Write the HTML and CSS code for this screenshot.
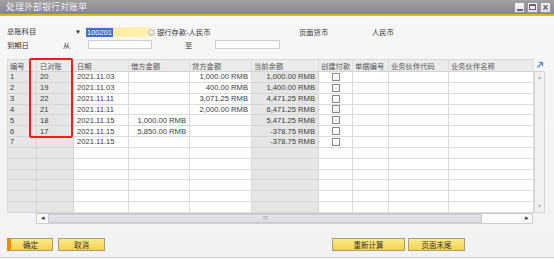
FILE: index.html
```html
<!DOCTYPE html>
<html>
<head>
<meta charset="utf-8">
<title>处理外部银行对账单</title>
<link rel="stylesheet" href="styles.css">
</head>
<body>
<div class="window">
  <div class="titlebar">
    <span class="title">处理外部银行对账单</span>
    <div class="winbtns">
      <span class="wb"><span class="ico-min"></span></span>
      <span class="wb"><span class="ico-max"></span></span>
      <span class="wb"><span class="ico-close">×</span></span>
    </div>
  </div>
  <div class="accent"></div>

  <div class="form">
    <div class="frow r1">
      <div class="select">总账科目<span class="arrow">▼</span></div>
      <div class="acct"><span class="selected">100201</span><span class="circle"></span></div>
      <span class="acctname">银行存款-人民币</span>
      <span class="curlbl">页面货币</span>
      <span>人民币</span>
    </div>
    <div class="frow r2">
      <span class="due">到期日</span>
      <span class="from">从</span>
      <div class="input in1"></div>
      <span class="to">至</span>
      <div class="input in2"></div>
    </div>
  </div>

  <div class="gridwrap">
    <div class="gridmain">
      <div class="grid">
        <div class="c hd">编号</div><div class="c hd">已对账</div><div class="c hd">日期</div><div class="c hd">借方金额</div><div class="c hd">贷方金额</div><div class="c hd">当前余额</div><div class="c hd">创建付款</div><div class="c hd">单据编号</div><div class="c hd">业务伙伴代码</div><div class="c hd">业务伙伴名称</div>

        <div class="c g">1</div><div class="c g">20</div><div class="c">2021.11.03</div><div class="c r"></div><div class="c r">1,000.00 RMB</div><div class="c g r">1,000.00 RMB</div><div class="c cb"><span class="box"></span></div><div class="c"></div><div class="c"></div><div class="c"></div>
        <div class="c g">2</div><div class="c g">19</div><div class="c">2021.11.03</div><div class="c r"></div><div class="c r">400.00 RMB</div><div class="c g r">1,400.00 RMB</div><div class="c cb"><span class="box"></span></div><div class="c"></div><div class="c"></div><div class="c"></div>
        <div class="c g">3</div><div class="c g">22</div><div class="c">2021.11.11</div><div class="c r"></div><div class="c r">3,071.25 RMB</div><div class="c g r">4,471.25 RMB</div><div class="c cb"><span class="box"></span></div><div class="c"></div><div class="c"></div><div class="c"></div>
        <div class="c g">4</div><div class="c g">21</div><div class="c">2021.11.11</div><div class="c r"></div><div class="c r">2,000.00 RMB</div><div class="c g r">6,471.25 RMB</div><div class="c cb"><span class="box"></span></div><div class="c"></div><div class="c"></div><div class="c"></div>
        <div class="c g">5</div><div class="c g">18</div><div class="c">2021.11.15</div><div class="c r">1,000.00 RMB</div><div class="c r"></div><div class="c g r">5,471.25 RMB</div><div class="c cb"><span class="box"></span></div><div class="c"></div><div class="c"></div><div class="c"></div>
        <div class="c g">6</div><div class="c g">17</div><div class="c">2021.11.15</div><div class="c r">5,850.00 RMB</div><div class="c r"></div><div class="c g r">-378.75 RMB</div><div class="c cb"><span class="box"></span></div><div class="c"></div><div class="c"></div><div class="c"></div>
        <div class="c g">7</div><div class="c g"></div><div class="c">2021.11.15</div><div class="c r"></div><div class="c r"></div><div class="c g r">-378.75 RMB</div><div class="c cb"><span class="box"></span></div><div class="c"></div><div class="c"></div><div class="c"></div>

        <div class="c g"></div><div class="c g"></div><div class="c"></div><div class="c"></div><div class="c"></div><div class="c g"></div><div class="c"></div><div class="c"></div><div class="c"></div><div class="c"></div>
        <div class="c g"></div><div class="c g"></div><div class="c"></div><div class="c"></div><div class="c"></div><div class="c g"></div><div class="c"></div><div class="c"></div><div class="c"></div><div class="c"></div>
        <div class="c g"></div><div class="c g"></div><div class="c"></div><div class="c"></div><div class="c"></div><div class="c g"></div><div class="c"></div><div class="c"></div><div class="c"></div><div class="c"></div>
        <div class="c g"></div><div class="c g"></div><div class="c"></div><div class="c"></div><div class="c"></div><div class="c g"></div><div class="c"></div><div class="c"></div><div class="c"></div><div class="c"></div>
        <div class="c g"></div><div class="c g"></div><div class="c"></div><div class="c"></div><div class="c"></div><div class="c g"></div><div class="c"></div><div class="c"></div><div class="c"></div><div class="c"></div>
        <div class="c g"></div><div class="c g"></div><div class="c"></div><div class="c"></div><div class="c"></div><div class="c g"></div><div class="c"></div><div class="c"></div><div class="c"></div><div class="c"></div>
      </div>
      <div class="side">
        <div class="expand">
          <svg width="8" height="8" viewBox="0 0 8 8"><path d="M1.5 6.5 L6.5 1.5 M3 1.5 H6.5 V5" fill="none" stroke="#4f86d9" stroke-width="1.2"/></svg>
        </div>
        <div class="vscroll">
          <span class="varrow">▴</span>
          <span class="varrow">▾</span>
        </div>
      </div>
    </div>
    <div class="hscroll">
      <span class="hbtn">◂</span>
      <span class="thumb"><span class="grip"></span></span>
      <span class="track"></span>
      <span class="hbtn">▸</span>
    </div>
    <div class="redbox"></div>
  </div>

  <div class="buttons">
    <button class="btn ok">确定</button>
    <button class="btn cancel">取消</button>
    <button class="btn recalc">重新计算</button>
    <button class="btn pageend">页面末尾</button>
  </div>
</div>
</body>
</html>
```

FILE: styles.css
```css
* { box-sizing: border-box; margin: 0; padding: 0; }
html, body { width: 554px; height: 259px; overflow: hidden; }
body {
  background: #f4f4f4;
  font-family: "Liberation Sans", "Noto Sans CJK SC", sans-serif;
  font-size: 7.3px;
  color: #333;
}
.window {
  width: 554px;
  height: 258px;
  display: flex;
  flex-direction: column;
  background: linear-gradient(#f7f7f7, #f2f2f2);
  border-bottom: 1px solid #d6d6d6;
}

/* title bar */
.titlebar {
  height: 14px;
  flex: none;
  background: linear-gradient(#a2a2a2, #868686);
  display: flex;
  align-items: center;
  justify-content: space-between;
  padding: 0 3px 0 6px;
}
.title { color: #fff; font-size: 9px; line-height: 14px; text-shadow: 0 0 1px #666; }
.winbtns { display: flex; gap: 2px; }
.wb {
  width: 11px; height: 11px;
  background: linear-gradient(#fbfbfb, #dedede);
  border: 1px solid #9a9a9a;
  display: flex; align-items: center; justify-content: center;
  position: relative;
}
.ico-min { width: 6px; height: 2px; background: #666; margin-top: 5px; }
.ico-max { width: 7px; height: 6px; border: 1px solid #666; border-top-width: 2px; }
.ico-close { font-size: 10px; line-height: 9px; color: #555; font-weight: bold; }
.accent { height: 2px; flex: none; background: #f0b400; }

/* form */
.form { padding-top: 11px; flex: none; }
.frow { display: flex; align-items: center; }
.r1 { height: 10px; }
.r2 { height: 9px; margin-top: 3px; }
.select {
  width: 78px; height: 10px; margin-left: 5px;
  padding-left: 2px;
  display: flex; align-items: center; justify-content: space-between;
  line-height: 10px;
}
.arrow { font-size: 6px; color: #222; margin-right: 2px; }
.acct {
  width: 66px; height: 10px; margin-left: 3px;
  background: linear-gradient(90deg, #fde98a, #fff3b5);
  display: flex; align-items: center; justify-content: space-between;
  font-size: 7.5px;
}
.selected { background: #3d6fca; color: #fff; line-height: 9px; padding: 0 1px; }
.circle {
  width: 7px; height: 7px; border-radius: 50%;
  background: radial-gradient(circle at 40% 40%, #ffffff, #c8c8c8);
  border: 1px solid #b8b8b8;
  margin-right: -3px;
}
.acctname { width: 142px; margin-left: 5px; }
.curlbl { width: 73px; }
.due { width: 56px; margin-left: 7px; }
.from { width: 25px; }
.to { width: 30px; margin-left: 33px; }
.input { height: 9px; background: #fff; border: 1px solid #cfcfcf; }
.in1 { width: 64px; }
.in2 { width: 65px; }

/* grid */
.gridwrap { margin: 10px 0 0 7px; position: relative; flex: none; }
.gridmain { display: flex; }
.grid {
  display: grid;
  grid-template-columns: 29px 37px 55px 61px 62px 67px 34px 36px 60px 85px;
  grid-template-rows: 12px repeat(13, 10.85px);
  border-top: 1px solid #d8d8d8;
  border-left: 1px solid #d8d8d8;
  font-size: 7.6px;
  color: #3a3a3a;
}
.c {
  background: #fff;
  border-right: 1px solid #dcdcdc;
  border-bottom: 1px solid #dcdcdc;
  padding: 0 2px;
  white-space: nowrap;
  overflow: hidden;
  display: flex; align-items: center;
}
.c.hd { background: #ebebeb; font-size: 7.3px; color: #555; border-bottom-color: #d2d2d2; }
.c.g { background: #e6e6e6; border-color: #d6d6d6; }
.c.r { justify-content: flex-end; padding-right: 3px; }
.grid .c:nth-child(10n+2) { padding-left: 3px; }
.grid .c:nth-child(10n+3) { padding-left: 3px; }
.c.cb { justify-content: center; }
.box {
  width: 8px; height: 8px;
  border: 1px solid #8a8a8a;
  background: linear-gradient(#fff, #f1f1f1);
}
.side { width: 11px; display: flex; flex-direction: column; }
.expand { height: 12px; display: flex; align-items: center; justify-content: center; }
.vscroll {
  flex: 1;
  background: #f1f1f1;
  border: 1px solid #d4d4d4;
  display: flex; flex-direction: column; justify-content: space-between; align-items: center;
  padding: 1px 0 2px;
  font-size: 6px; color: #b0b0b0; line-height: 8px;
}
.hscroll {
  margin-left: 29px;
  width: 497px;
  height: 11px;
  display: flex;
  border: 1px solid #d0d0d0;
  border-top-color: #c8c8c8;
  background: #f6f6f6;
}
.hbtn {
  width: 11px; flex: none;
  background: #fafafa;
  display: flex; align-items: center; justify-content: center;
  font-size: 7px; color: #333;
}
.thumb {
  width: 434px; flex: none;
  background: linear-gradient(#e6e3e8, #dddae0);
  border: 1px solid #cdcbd0;
  display: flex; align-items: center; justify-content: center;
}
.grip {
  width: 5px; height: 4px;
  background: repeating-linear-gradient(#b8b6bb 0 1px, transparent 1px 2px);
}
.track { flex: 1; background: #fbfbfb; }
.redbox {
  position: absolute;
  left: 22px; top: -1px;
  width: 44px; height: 80px;
  border: 2px solid #e5221b;
  border-radius: 2px;
  pointer-events: none;
}

/* buttons */
.buttons {
  display: flex;
  margin-top: 14px;
  padding-left: 7px;
  flex: none;
}
.btn {
  height: 13px;
  font-family: inherit;
  font-size: 7.5px;
  color: #333;
  background: linear-gradient(#fdeb8c, #f4d14e);
  border: 1px solid #a99d74;
  display: flex; align-items: center; justify-content: center;
}
.ok { width: 46px; border-left: 4px solid #f08a00; padding-right: 2px; }
.cancel { width: 47px; margin-left: 5px; }
.recalc { width: 73px; margin-left: 227px; }
.pageend { width: 57px; margin-left: 3px; }
```
